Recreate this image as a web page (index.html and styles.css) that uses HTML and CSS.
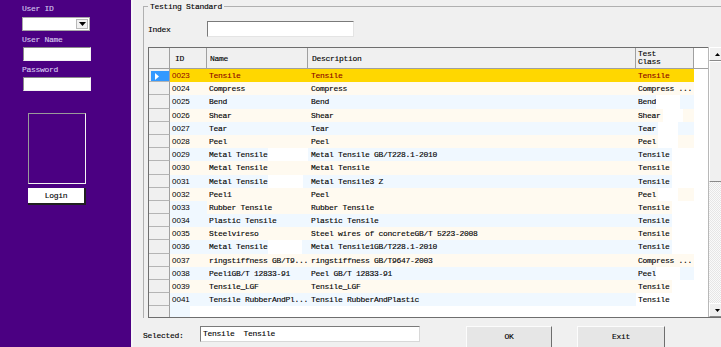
FILE: index.html
```html
<!DOCTYPE html>
<html lang="en">
<head>
<meta charset="utf-8">
<link rel="stylesheet" href="styles.css">
<title>Testing Standard</title>
</head>
<body>
<div class="side">
  <div class="side-label">User ID</div>
  <div class="combo"><span class="combo-btn"><svg width="7" height="4" viewBox="0 0 7 4"><path d="M0 0h7L3.5 4z" fill="#000"/></svg></span></div>
  <div class="side-label gap">User Name</div>
  <div class="field"></div>
  <div class="side-label gap">Password</div>
  <div class="field"></div>
  <div class="photo"></div>
  <div class="login">Login</div>
</div>

<div class="main">
  <div class="group">
    <span class="legend">Testing Standard</span>
    <div class="index-row">
      <span class="index-label">Index</span>
      <span class="index-input"></span>
    </div>

    <div class="grid">
      <div class="table">
        <div class="thead">
          <div class="th"></div>
          <div class="th th-id">ID</div>
          <div class="th">Name</div>
          <div class="th th-desc">Description</div>
          <div class="th th-class">Test<br>Class</div>
          <div class="th th-fill"></div>
        </div>
        <div class="tbody">
          <div class="row sel">
            <div class="rh"><span class="cur"><svg width="4" height="7" viewBox="0 0 4 7"><path d="M0 0l4 3.5L0 7z" fill="#fff"/></svg></span></div>
            <div class="c id">0023</div><div class="c">Tensile</div><div class="c desc">Tensile</div><div class="c">Tensile</div><div class="fill"></div>
          </div>
          <div class="row cream">
            <div class="rh"></div>
            <div class="c id">0024</div><div class="c">Compress</div><div class="c desc">Compress</div><div class="c">Compress ...</div><div class="fill"></div>
          </div>
          <div class="row blue">
            <div class="rh"></div>
            <div class="c id">0025</div><div class="c">Bend</div><div class="c desc">Bend</div><div class="c">Bend<i class="wp w24"></i></div><div class="fill"></div>
          </div>
          <div class="row cream">
            <div class="rh"></div>
            <div class="c id">0026</div><div class="c">Shear</div><div class="c desc">Shear</div><div class="c">Shear<i class="wp w20 sp"></i></div><div class="fill"></div>
          </div>
          <div class="row blue">
            <div class="rh"></div>
            <div class="c id">0027</div><div class="c">Tear</div><div class="c desc">Tear</div><div class="c">Tear<i class="wp w20 sp"></i></div><div class="fill"></div>
          </div>
          <div class="row cream">
            <div class="rh"></div>
            <div class="c id">0028</div><div class="c">Peel</div><div class="c desc">Peel</div><div class="c">Peel<i class="wp w20 sp"></i></div><div class="fill"></div>
          </div>
          <div class="row blue">
            <div class="rh"></div>
            <div class="c id">0029</div><div class="c">Metal Tensile<i class="wp rest"></i></div><div class="c desc">Metal Tensile GB/T228.1-2010</div><div class="c">Tensile<i class="wp rest sp"></i></div><div class="fill"></div>
          </div>
          <div class="row cream">
            <div class="rh"></div>
            <div class="c id">0030</div><div class="c">Metal Tensile</div><div class="c desc">Metal Tensile</div><div class="c">Tensile<i class="wp rest sp"></i></div><div class="fill"></div>
          </div>
          <div class="row blue">
            <div class="rh"></div>
            <div class="c id">0031</div><div class="c">Metal Tensile<i class="wp w35"></i></div><div class="c desc">Metal Tensile3 Z</div><div class="c">Tensile<i class="wp rest sp"></i></div><div class="fill"></div>
          </div>
          <div class="row cream">
            <div class="rh"></div>
            <div class="c id">0032</div><div class="c">Peel1</div><div class="c desc">Peel</div><div class="c">Peel<i class="wp w20 sp"></i></div><div class="fill"></div>
          </div>
          <div class="row cream">
            <div class="rh"></div>
            <div class="c id tint">0033</div><div class="c">Rubber Tensile</div><div class="c desc">Rubber Tensile</div><div class="c">Tensile<i class="wp rest sp"></i></div><div class="fill"></div>
          </div>
          <div class="row blue">
            <div class="rh"></div>
            <div class="c id">0034</div><div class="c">Plastic Tensile</div><div class="c desc">Plastic Tensile</div><div class="c">Tensile<i class="wp rest sp"></i></div><div class="fill"></div>
          </div>
          <div class="row cream">
            <div class="rh"></div>
            <div class="c id">0035</div><div class="c">Steelvireso</div><div class="c desc">Steel wires of concreteGB/T 5223-2008</div><div class="c">Tensile<i class="wp rest sp"></i></div><div class="fill"></div>
          </div>
          <div class="row blue">
            <div class="rh"></div>
            <div class="c id">0036</div><div class="c">Metal Tensile<i class="wp w34"></i></div><div class="c desc">Metal Tensile1GB/T228.1-2010</div><div class="c">Tensile<i class="wp rest sp"></i></div><div class="fill"></div>
          </div>
          <div class="row cream">
            <div class="rh"></div>
            <div class="c id">0037</div><div class="c">ringstiffness GB/T9...</div><div class="c desc">ringstiffness GB/T9647-2003</div><div class="c">Compress ...</div><div class="fill"></div>
          </div>
          <div class="row blue">
            <div class="rh"></div>
            <div class="c id">0038</div><div class="c">Peel1GB/T 12833-91</div><div class="c desc">Peel GB/T 12833-91</div><div class="c">Peel<i class="wp w24"></i></div><div class="fill"></div>
          </div>
          <div class="row cream">
            <div class="rh"></div>
            <div class="c id">0039</div><div class="c">Tensile_LGF</div><div class="c desc">Tensile_LGF</div><div class="c">Tensile<i class="wp rest sp"></i></div><div class="fill"></div>
          </div>
          <div class="row blue">
            <div class="rh"></div>
            <div class="c id">0041</div><div class="c">Tensile RubberAndPl...</div><div class="c desc">Tensile RubberAndPlastic</div><div class="c plain">Tensile</div><div class="fill"></div>
          </div>
          <div class="row blank">
            <div class="rh"></div>
            <div class="c id"><i class="new"></i></div><div class="c"></div><div class="c"></div><div class="c"></div><div class="fill"></div>
          </div>
        </div>
      </div>
      <div class="vscroll">
        <div class="sb-btn"><svg width="5" height="3" viewBox="0 0 5 3"><path d="M0 3h5L2.5 0z" fill="#000"/></svg></div>
        <div class="sb-thumb"></div>
        <div class="sb-track"></div>
        <div class="sb-btn"><svg width="5" height="3" viewBox="0 0 5 3"><path d="M0 0h5L2.5 3z" fill="#000"/></svg></div>
      </div>
    </div>
  </div>

  <div class="foot">
    <span class="sel-label">Selected:</span>
    <span class="sel-input">Tensile  Tensile</span>
    <span class="btn btn-ok">OK</span>
    <span class="btn btn-exit">Exit</span>
  </div>
</div>
</body>
</html>
```

FILE: styles.css
```css
* {
  box-sizing: border-box;
}

html, body {
  margin: 0;
  padding: 0;
}

body {
  width: 721px;
  height: 347px;
  overflow: hidden;
  display: flex;
  font-family: "Liberation Mono", monospace;
  font-size: 8px;
  letter-spacing: -0.3px;
  -webkit-text-stroke: 0.12px;
  color: #000;
  background: #f0f0f0;
}

/* left login panel */
.side {
  width: 133px;
  flex: none;
  background: #4b0082;
  border-right: 2px solid #f6f6f6;
  padding: 3px 0 0 22px;
}

.side-label {
  color: #d6c8ee;
  height: 11px;
  line-height: 11px;
}

.side-label.gap {
  margin-top: 3px;
}

.combo {
  width: 68px;
  height: 14px;
  margin-top: 3px;
  background: #fff;
  border: 1px solid #a8a8a8;
  display: flex;
  justify-content: flex-end;
  padding: 1px;
}

.combo-btn {
  width: 12px;
  background: #f0f0f0;
  border: 1px solid #b8b8b8;
  display: flex;
  align-items: center;
  justify-content: center;
}

.field {
  width: 68px;
  height: 14px;
  margin: 2px 0 0 1px;
  background: #fff;
  border: 1px solid;
  border-color: #8a8a8a #f4f4f4 #f4f4f4 #8a8a8a;
}

.photo {
  width: 58px;
  height: 71px;
  margin: 22px 0 0 6px;
  border: 1px solid;
  border-color: #9a9a9a #f4f4f4 #f4f4f4 #9a9a9a;
}

.login {
  width: 58px;
  height: 17px;
  margin: 4px 0 0 6px;
  background: #fff;
  border-right: 2px solid #202020;
  border-bottom: 2px solid #202020;
  text-align: center;
  line-height: 15px;
}

/* right part */
.main {
  flex: 1;
  overflow: hidden;
  padding-left: 10px;
}

.group {
  position: relative;
  width: 600px;
  margin-top: 6px;
  border-top: 1px solid #b0b0b0;
  border-left: 1px solid #b0b0b0;
  padding: 14px 0 0 4px;
}

.legend {
  position: absolute;
  top: -6px;
  left: 4px;
  padding: 0 2px;
  line-height: 11px;
  background: #f0f0f0;
}

.index-row {
  display: flex;
  align-items: center;
  height: 16px;
}

.index-label {
  width: 59px;
}

.index-input {
  width: 147px;
  height: 16px;
  background: #fff;
  border: 1px solid;
  border-color: #7a7a7a #e4e4e4 #e4e4e4 #7a7a7a;
}

.grid {
  display: flex;
  height: 271px;
  margin-top: 10px;
  border-bottom: 1px solid #6e6e6e;
}

.table {
  width: 560px;
  flex: none;
  display: flex;
  flex-direction: column;
  background: #fff;
  border-left: 1px solid #6e6e6e;
  border-top: 1px solid #6e6e6e;
}

.thead,
.row {
  display: grid;
  grid-template-columns: 21px 37px 101px 328px 58px 1fr;
}

.thead {
  height: 21px;
  border-bottom: 1px solid #a0a0a0;
}

.th {
  display: flex;
  align-items: center;
  padding-left: 3px;
  background: #f0f0f0;
  border-right: 1px solid #a0a0a0;
}

.th-id {
  padding-left: 5px;
}

.th-desc {
  padding-left: 4px;
}

.th-class {
  padding-left: 2px;
  line-height: 8px;
}

.th-fill {
  background: #fff;
  border-right: none;
}

.tbody {
  flex: 1;
  overflow: hidden;
}

.row {
  height: 13.2px;
  line-height: 13.2px;
}

.rh {
  background: #f0f0f0;
  border-right: 1px solid #a0a0a0;
  border-bottom: 1px solid #b4b4b4;
  padding: 2px 0 0 2px;
}

.cur {
  display: flex;
  align-items: center;
  height: 10px;
  padding-left: 4px;
  background: #3399ff;
}

.c {
  display: flex;
  white-space: nowrap;
  overflow: hidden;
  padding-left: 2px;
}

.id {
  font-family: "Liberation Sans", sans-serif;
  letter-spacing: 0;
  -webkit-text-stroke: 0;
}

.desc {
  padding-left: 3px;
}

.fill {
  background: #fff;
}

.cream .c {
  background: #fffaf0;
}

.blue .c {
  background: #f0f8ff;
}

.cream .c.tint {
  background: #f0f8ff;
}

.row .c.plain,
.blank .c {
  background: #fff;
}

.sel .c {
  background: #ffd700;
  color: #8b0000;
}

/* leftover white paint in the cells */
.wp {
  display: block;
  height: 100%;
  background: #fff;
  flex: none;
}

.wp.sp {
  margin-left: 2px;
}

.w20 { width: 20px; }
.w24 { width: 24px; }
.w34 { width: 34px; }
.w35 { width: 35px; }

.wp.rest {
  flex: 1;
}

.new {
  display: block;
  width: 20px;
  height: 100%;
  margin-left: -2px;
  background: #f0f8ff;
}

/* scrollbar */
.vscroll {
  width: 17px;
  flex: none;
  display: flex;
  flex-direction: column;
  border-left: 1px solid #b8b8b8;
  background: repeating-conic-gradient(#fafafa 0 25%, #e6e6e6 0 50%) 0 0 / 2px 2px;
}

.sb-btn {
  height: 14px;
  display: flex;
  align-items: center;
  justify-content: center;
  background: #f0f0f0;
  border: 1px solid;
  border-color: #fff #8a8a8a #8a8a8a #fff;
}

.sb-thumb {
  height: 121px;
  background: #f0f0f0;
  border: 1px solid;
  border-color: #fff #8a8a8a #8a8a8a #fff;
}

.sb-track {
  flex: 1;
}

/* bottom bar */
.foot {
  display: flex;
  align-items: flex-start;
  margin-top: 8px;
}

.sel-label {
  width: 57px;
  padding-top: 3px;
  line-height: 14px;
}

.sel-input {
  width: 220px;
  height: 16px;
  padding-left: 2px;
  line-height: 13px;
  white-space: pre;
  background: #fff;
  border: 1px solid;
  border-color: #7a7a7a #d8d8d8 #d8d8d8 #7a7a7a;
}

.btn {
  height: 24px;
  line-height: 20px;
  text-align: center;
  background: #e6e6e6;
  border: 1px solid;
  border-color: #fcfcfc #6e6e6e #6e6e6e #fcfcfc;
}

.btn-ok {
  width: 86px;
  margin-left: 46px;
}

.btn-exit {
  width: 88px;
  margin-left: 25px;
}
```
